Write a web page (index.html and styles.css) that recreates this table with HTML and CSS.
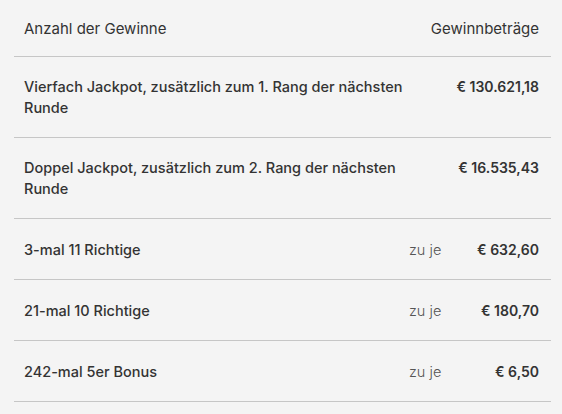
FILE: index.html
```html
<!DOCTYPE html>
<html lang="de">
<head>
<meta charset="utf-8">
<title>Gewinnquoten</title>
<link rel="stylesheet" href="styles.css">
</head>
<body>
<div class="quoten">
  <div class="row head">
    <div class="label">Anzahl der Gewinne</div>
    <div class="amount-head">Gewinnbeträge</div>
  </div>
  <div class="row tall">
    <div class="label wide">Vierfach Jackpot, zusätzlich zum 1. Rang der nächsten Runde</div>
    <div class="amount">€ 130.621,18</div>
  </div>
  <div class="row tall">
    <div class="label wide">Doppel Jackpot, zusätzlich zum 2. Rang der nächsten Runde</div>
    <div class="amount">€ 16.535,43</div>
  </div>
  <div class="row">
    <div class="label">3-mal 11 Richtige</div>
    <div class="each">zu je</div>
    <div class="amount">€ 632,60</div>
  </div>
  <div class="row">
    <div class="label">21-mal 10 Richtige</div>
    <div class="each">zu je</div>
    <div class="amount">€ 180,70</div>
  </div>
  <div class="row">
    <div class="label">242-mal 5er Bonus</div>
    <div class="each">zu je</div>
    <div class="amount">€ 6,50</div>
  </div>
</div>
</body>
</html>
```
FILE: styles.css
```css
html, body {
  margin: 0;
  padding: 0;
  background: #f4f4f4;
}
body {
  font-family: "Inter", "Open Sans", "Liberation Sans", sans-serif;
  font-size: 14.5px;
  line-height: 21px;
  color: #333;
}
.quoten {
  margin: 0 11px 0 14px;
}
.row {
  display: grid;
  grid-template-columns: 1fr 32px 82px;
  column-gap: 16px;
  align-items: start;
  padding: 20px 12px 19px 10px;
  border-bottom: 1px solid #c6c6c6;
}
.row.head {
  display: flex;
  justify-content: space-between;
  padding: 18px 12px 17px 10px;
  font-size: 15px;
}
.row.tall {
  padding: 19px 12px 19px 10px;
}
.head .label {
  font-weight: 400;
}
.label {
  font-weight: 500;
}
.label.wide {
  grid-column: 1 / 3;
  padding-right: 14px;
}
.each {
  font-weight: 300;
  color: #555;
  white-space: nowrap;
}
.amount {
  font-weight: 600;
  font-size: 14px;
  justify-self: end;
  white-space: nowrap;
}
.amount-head {
  text-align: right;
}
```
